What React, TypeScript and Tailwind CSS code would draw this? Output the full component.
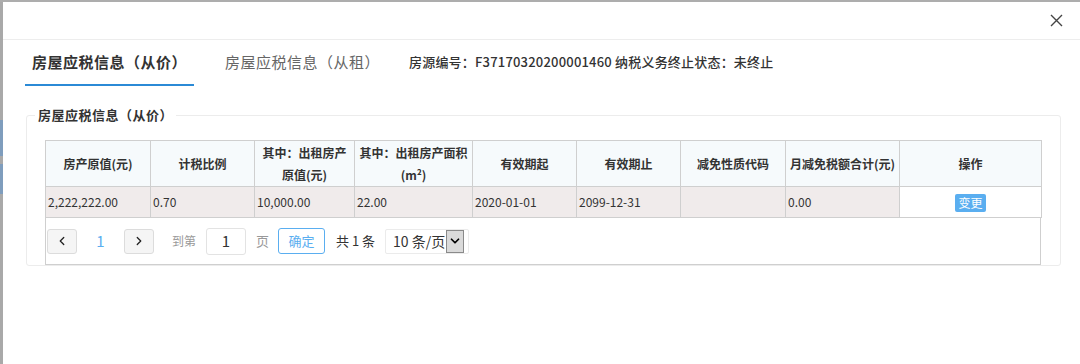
import { ChevronLeft, ChevronRight, ChevronDown } from "lucide-react";

const FONT = { fontFamily: '"Noto Sans CJK SC", "Noto Sans", sans-serif' };

const columns = [
  { w: 105, label: ["房产原值(元)"] },
  { w: 104, label: ["计税比例"] },
  { w: 100, label: ["其中：出租房产", "原值(元)"] },
  { w: 118, label: ["其中：出租房产面积", "(m²)"] },
  { w: 104, label: ["有效期起"] },
  { w: 104, label: ["有效期止"] },
  { w: 105, label: ["减免性质代码"] },
  { w: 114, label: ["月减免税额合计(元)"] },
  { w: 142, label: ["操作"] },
];

const row = ["2,222,222.00", "0.70", "10,000.00", "22.00", "2020-01-01", "2099-12-31", "", "0.00"];

function CloseIcon() {
  return (
    <svg width="13" height="13" viewBox="0 0 13 13" className="text-[#444]">
      <path d="M1 1 L12 12 M12 1 L1 12" stroke="currentColor" strokeWidth="1.4" />
    </svg>
  );
}

export default function App() {
  return (
    <div style={FONT} className="w-[1080px] h-[364px] bg-white overflow-hidden flex flex-col text-[#333]">
      <div className="h-[2px] bg-[#adadad] shrink-0" />
      <div className="flex flex-1">
        {/* strip of the page behind the dialog */}
        <div className="w-[3px] bg-[#a9a9a9] flex flex-col shrink-0">
          <div className="h-[118px]" />
          <div className="h-[36px] bg-[#7f9dbd]" />
          <div className="h-[8px]" />
          <div className="h-[30px] bg-[#7f9dbd]" />
        </div>

        <div className="flex-1 flex flex-col">
          <div className="h-[38px] border-b border-[#ededed] flex items-center justify-end pr-[17px]">
            <CloseIcon />
          </div>

          <div className="flex items-start h-[47px]">
            <div className="ml-[22px] w-[169px] h-[46px] border-b-2 border-[#2b8ad6] flex items-center justify-center text-[15px] tracking-[0.5px] font-bold text-[#333]">
              房屋应税信息（从价）
            </div>
            <div className="ml-[31px] h-[44px] flex items-center text-[15px] tracking-[0.5px] text-[#666]">
              房屋应税信息（从租）
            </div>
            <div className="ml-[29px] h-[44px] flex items-center text-[13px] tracking-[0.2px] font-medium text-[#333]">
              房源编号：F37170320200001460 纳税义务终止状态：未终止
            </div>
          </div>

          <fieldset className="ml-[23px] mt-[19px] w-[1035px] border border-[#ececec] rounded-[3px] p-0 m-0">
            <legend className="ml-[8px] px-[3px] text-[13px] tracking-[0.5px] leading-[18px] font-bold text-[#333]">
              房屋应税信息（从价）
            </legend>
            <div className="pt-[16px] px-[18px]">
              <table className="table-fixed border-collapse w-[996px] text-[12px]">
                <colgroup>
                  {columns.map((c, i) => (
                    <col key={i} style={{ width: c.w }} />
                  ))}
                </colgroup>
                <thead>
                  <tr className="h-[46px] bg-[#f6fafc]">
                    {columns.map((c, i) => (
                      <th key={i} className="border border-[#cfcfcf] font-bold text-[#333] text-center leading-[22px] p-0">
                        {c.label.map((l) => (
                          <div key={l}>{l}</div>
                        ))}
                      </th>
                    ))}
                  </tr>
                </thead>
                <tbody>
                  <tr className="h-[31px]">
                    {row.map((v, i) => (
                      <td key={i} className="border border-[#cfcfcf] bg-[#f0ebeb] pl-[2px] p-0 text-[#333]">
                        {v}
                      </td>
                    ))}
                    <td className="border border-[#cfcfcf] bg-white text-center p-0">
                      <span className="inline-block w-[31px] h-[18px] leading-[18px] bg-[#5aaef0] text-white text-[12px] rounded-[2px] align-middle">
                        变更
                      </span>
                    </td>
                  </tr>
                </tbody>
              </table>

              <div className="w-[996px] h-[47px] border-l border-r border-b border-[#cfcfcf] flex items-center pl-[1px] text-[13px]">
                <button className="w-[30px] h-[25px] bg-[#f5f5f5] border border-[#dcdcdc] rounded-[3px] flex items-center justify-center text-[#222]">
                  <ChevronLeft size={14} strokeWidth={2.2} />
                </button>
                <span className="w-[47px] text-center text-[15px] text-[#5aaef0]">1</span>
                <button className="w-[30px] h-[25px] bg-[#f5f5f5] border border-[#dcdcdc] rounded-[3px] flex items-center justify-center text-[#222]">
                  <ChevronRight size={14} strokeWidth={2.2} />
                </button>
                <span className="ml-[18px] text-[12px] text-[#999]">到第</span>
                <div className="ml-[10px] w-[40px] h-[27px] border border-[#e3e3e3] rounded-[3px] flex items-center justify-center text-[15px] text-[#333]">
                  1
                </div>
                <span className="ml-[10px] text-[#999]">页</span>
                <button className="ml-[9px] w-[47px] h-[26px] border border-[#5aaef0] rounded-[3px] text-[#5aaef0] text-[13px]">
                  确定
                </button>
                <span className="ml-[11px] text-[#333] whitespace-nowrap">共 1 条</span>
                <div className="ml-[10px] w-[84px] h-[25px] border border-[#ebebeb] rounded-[2px] flex items-center pl-[7px] text-[14px] text-[#333] whitespace-nowrap">
                  <span className="flex-1">10 条/页</span>
                  <span className="w-[18px] h-[23px] mr-[4px] bg-[#dadada] border border-[#8a8a8a] flex items-center justify-center text-black shrink-0">
                    <ChevronDown size={14} strokeWidth={3} />
                  </span>
                </div>
              </div>
            </div>
          </fieldset>
        </div>
      </div>
    </div>
  );
}
